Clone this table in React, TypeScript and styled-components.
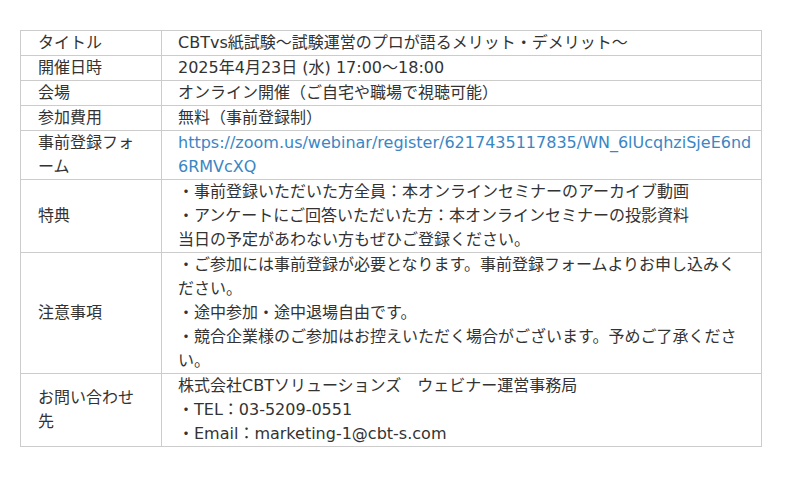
import styled, { createGlobalStyle } from "styled-components";

const GlobalStyle = createGlobalStyle`
  body {
    margin: 0;
    background: #ffffff;
    font-family: "DejaVu Sans", "Noto Sans CJK JP", sans-serif;
    color: #333333;
  }
`;

const Page = styled.div`
  padding: 30px 20px;
`;

const Table = styled.table`
  width: 742px;
  border-collapse: collapse;
  font-size: 16px;
  line-height: 24px;
`;

const Head = styled.th`
  width: 107px;
  padding: 0 16px 0 17px;
  border: 1px solid #cccccc;
  font-weight: normal;
  text-align: left;
  vertical-align: middle;
`;

const Cell = styled.td<{ $wide?: boolean }>`
  padding: 0 ${(p) => (p.$wide ? "8px" : "11px")} 0 16px;
  border: 1px solid #cccccc;
  vertical-align: top;
  word-break: break-all;
`;

const Line = styled.div``;

const Link = styled.a`
  color: #3a86c4;
  text-decoration: none;
`;

interface Row {
  label: string;
  lines: React.ReactNode[];
  wide?: boolean;
}

const rows: Row[] = [
  { label: "タイトル", lines: ["CBTvs紙試験〜試験運営のプロが語るメリット・デメリット〜"] },
  { label: "開催日時", lines: ["2025年4月23日 (水) 17:00〜18:00"] },
  { label: "会場", lines: ["オンライン開催（ご自宅や職場で視聴可能）"] },
  { label: "参加費用", lines: ["無料（事前登録制）"] },
  {
    label: "事前登録フォーム",
    wide: true,
    lines: [
      <Link href="#" key="l">
        https://zoom.us/webinar/register/6217435117835/WN_6lUcqhziSjeE6nd6RMVcXQ
      </Link>,
    ],
  },
  {
    label: "特典",
    lines: [
      "・事前登録いただいた方全員：本オンラインセミナーのアーカイブ動画",
      "・アンケートにご回答いただいた方：本オンラインセミナーの投影資料",
      "当日の予定があわない方もぜひご登録ください。",
    ],
  },
  {
    label: "注意事項",
    lines: [
      "・ご参加には事前登録が必要となります。事前登録フォームよりお申し込みください。",
      "・途中参加・途中退場自由です。",
      "・競合企業様のご参加はお控えいただく場合がございます。予めご了承ください。",
    ],
  },
  {
    label: "お問い合わせ先",
    lines: [
      "株式会社CBTソリューションズ　ウェビナー運営事務局",
      "・TEL：03-5209-0551",
      "・Email：marketing-1@cbt-s.com",
    ],
  },
];

export default function App() {
  return (
    <Page>
      <GlobalStyle />
      <Table>
        <tbody>
          {rows.map((row) => (
            <tr key={row.label}>
              <Head>{row.label}</Head>
              <Cell $wide={row.wide}>
                {row.lines.map((line, i) => (
                  <Line key={i}>{line}</Line>
                ))}
              </Cell>
            </tr>
          ))}
        </tbody>
      </Table>
    </Page>
  );
}
